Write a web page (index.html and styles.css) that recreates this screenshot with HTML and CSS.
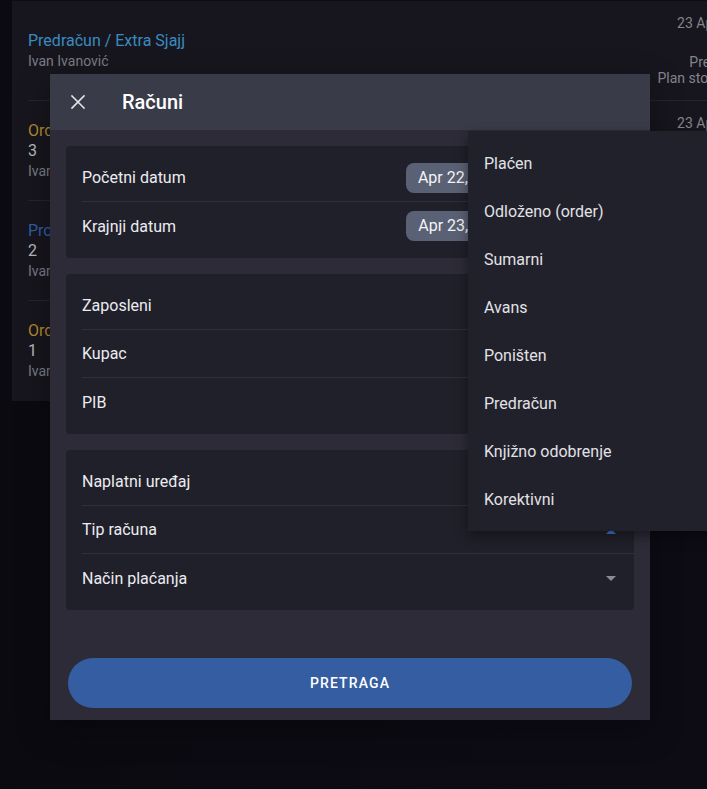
FILE: index.html
```html
<!DOCTYPE html>
<html lang="sr">
<head>
    <meta charset="UTF-8">
    <meta name="viewport" content="width=device-width, initial-scale=1.0">
    <title>Računi</title>
    <link rel="stylesheet" href="styles.css">
</head>
<body>

    <div class="list">
        <div class="item">
            <div class="item-main">
                <div class="item-title blue">Predračun / Extra Sjajj</div>
                <div class="item-sub">Ivan Ivanović</div>
            </div>
            <div class="item-side">
                <div class="item-date">23 Apr 2024</div>
                <div class="item-info">
                    <div>Predračun</div>
                    <div>Plan stolova 12</div>
                </div>
            </div>
        </div>
        <div class="item">
            <div class="item-main">
                <div class="item-title orange">Order / Extra Sjajj</div>
                <div class="item-num">3</div>
                <div class="item-sub">Ivan Ivanović</div>
            </div>
            <div class="item-side">
                <div class="item-date">23 Apr 2024</div>
                <div class="item-info">
                    <div>Order</div>
                    <div>Plan stolova 12</div>
                </div>
            </div>
        </div>
        <div class="item">
            <div class="item-main">
                <div class="item-title navy">Promet / Extra Sjajj</div>
                <div class="item-num">2</div>
                <div class="item-sub">Ivan Ivanović</div>
            </div>
            <div class="item-side">
                <div class="item-date">23 Apr 2024</div>
                <div class="item-info">
                    <div>Promet</div>
                    <div>Plan stolova 11</div>
                </div>
            </div>
        </div>
        <div class="item">
            <div class="item-main">
                <div class="item-title orange">Order / Extra Sjajj</div>
                <div class="item-num">1</div>
                <div class="item-sub">Ivan Ivanović</div>
            </div>
            <div class="item-side">
                <div class="item-date">23 Apr 2024</div>
                <div class="item-info">
                    <div>Order</div>
                    <div>Plan stolova 11</div>
                </div>
            </div>
        </div>
    </div>

    <div class="modal">
        <div class="modal-header">
            <button class="close-btn" type="button">
                <svg width="24" height="24" viewBox="0 0 24 24">
                    <path d="M6 6 L18 18 M18 6 L6 18" stroke="#e4e4e8" stroke-width="1.6" fill="none" stroke-linecap="square"/>
                </svg>
            </button>
            <h2>Računi</h2>
        </div>

        <div class="modal-body">
            <div class="card">
                <div class="row">
                    <span>Početni datum</span>
                    <div class="datetime">
                        <span class="chip">Apr 22, 2024</span>
                        <span class="chip">12:00 AM</span>
                    </div>
                </div>
                <div class="row">
                    <span>Krajnji datum</span>
                    <div class="datetime">
                        <span class="chip">Apr 23, 2024</span>
                        <span class="chip">11:59 PM</span>
                    </div>
                </div>
            </div>

            <div class="card">
                <div class="row"><span>Zaposleni</span></div>
                <div class="row"><span>Kupac</span></div>
                <div class="row"><span>PIB</span></div>
            </div>

            <div class="card">
                <div class="row">
                    <span>Naplatni uređaj</span>
                    <span class="caret"></span>
                </div>
                <div class="row">
                    <span>Tip računa</span>
                    <span class="caret open"></span>
                </div>
                <div class="row">
                    <span>Način plaćanja</span>
                    <span class="caret"></span>
                </div>
            </div>

            <button class="search-btn" type="button">Pretraga</button>
        </div>
    </div>

    <div class="menu">
        <div class="menu-item">Plaćen</div>
        <div class="menu-item">Odloženo (order)</div>
        <div class="menu-item">Sumarni</div>
        <div class="menu-item">Avans</div>
        <div class="menu-item">Poništen</div>
        <div class="menu-item">Predračun</div>
        <div class="menu-item">Knjižno odobrenje</div>
        <div class="menu-item">Korektivni</div>
    </div>

</body>
</html>
```

FILE: styles.css
```css
body {
    font-family: Roboto, "Liberation Sans", sans-serif;
    margin: 0;
    padding: 0;
    width: 707px;
    height: 789px;
    overflow: hidden;
    background: linear-gradient(90deg, #0b0a10 0%, #0c0b13 40%, #0d0c15 100%);
    position: relative;
}

/* list behind the modal */
.list {
    margin-left: 12px;
    width: 757px;
    padding: 0 16px;
    box-sizing: border-box;
    background-color: #17161e;
    border-top: 1px solid #0e0d14;
}
.item {
    height: 100px;
    display: flex;
    justify-content: space-between;
    align-items: center;
    border-bottom: 1px solid #25242d;
    box-sizing: border-box;
}
.item:last-child {
    border-bottom: none;
}
.item-main {
    line-height: 20px;
}
.item-title {
    font-size: 16px;
}
.item-title.blue {
    color: #3a8bc0;
}
.item-title.orange {
    color: #b38a2e;
}
.item-title.navy {
    color: #2f5ea6;
}
.item-num {
    font-size: 16px;
    color: #b9b9be;
}
.item-sub {
    font-size: 14px;
    color: #7c7b83;
}
.item-side {
    height: 100%;
    padding: 14px 0;
    box-sizing: border-box;
    display: flex;
    flex-direction: column;
    justify-content: space-between;
    align-items: flex-end;
    font-size: 14px;
    line-height: 16px;
    color: #85848c;
    text-align: right;
}

/* modal */
.modal {
    position: absolute;
    left: 50px;
    top: 74px;
    width: 600px;
    background-color: #2c2b37;
    box-shadow: 0 10px 30px rgba(0, 0, 0, 0.35);
}
.modal-header {
    height: 56px;
    background-color: #393c48;
    display: flex;
    align-items: center;
}
.close-btn {
    background: none;
    border: none;
    padding: 0;
    margin-left: 16px;
    width: 24px;
    height: 24px;
    cursor: pointer;
}
.close-btn svg {
    display: block;
}
.modal-header h2 {
    margin: 0 0 0 32px;
    font-size: 20px;
    font-weight: 500;
    color: #ffffff;
}
.modal-body {
    padding: 16px 16px 12px;
    display: flex;
    flex-direction: column;
    gap: 16px;
}
.card {
    background-color: #20202a;
    border-radius: 4px;
    padding: 8px 0 8px 16px;
}
.row {
    height: 48px;
    box-sizing: border-box;
    padding-right: 16px;
    display: flex;
    align-items: center;
    justify-content: space-between;
    border-bottom: 1px solid #2f2f3a;
    font-size: 16px;
    color: #ececf0;
}
.row:last-child {
    border-bottom: none;
}
.datetime {
    display: flex;
    gap: 6px;
}
.chip {
    height: 30px;
    line-height: 30px;
    padding: 0 12px;
    border-radius: 8px;
    background-color: #5b6174;
    color: #f4f4f6;
}
.caret {
    width: 0;
    height: 0;
    margin-right: 2px;
    border-left: 5px solid transparent;
    border-right: 5px solid transparent;
    border-top: 5px solid #8b8b92;
}
.caret.open {
    border-top: none;
    border-bottom: 5px solid #3b74d0;
    margin-top: 4px;
}
.search-btn {
    margin: 32px 2px 0;
    height: 50px;
    border: none;
    border-radius: 25px;
    background-color: #355da2;
    color: #ffffff;
    font-family: Roboto, "Liberation Sans", sans-serif;
    font-size: 14px;
    font-weight: 500;
    letter-spacing: 0.08em;
    text-transform: uppercase;
    cursor: pointer;
}

/* open select popover */
.menu {
    position: absolute;
    left: 468px;
    top: 131px;
    width: 260px;
    padding: 9px 0 7px;
    background-color: #21212b;
    box-shadow: 0 5px 12px rgba(0, 0, 0, 0.4);
}
.menu-item {
    height: 48px;
    line-height: 48px;
    padding-left: 16px;
    font-size: 16px;
    color: #e2e2e6;
}
```
